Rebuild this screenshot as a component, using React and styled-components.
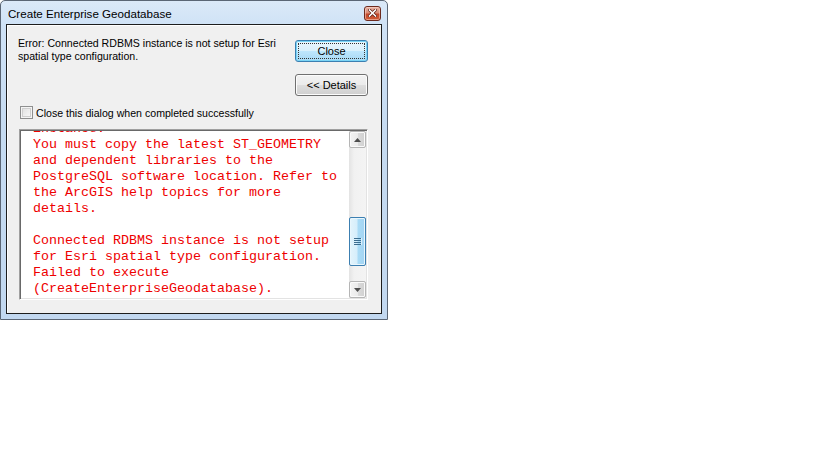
import React from 'react'
import styled, { createGlobalStyle } from 'styled-components'

const GlobalStyle = createGlobalStyle`
  html, body {
    margin: 0;
    padding: 0;
    background: #ffffff;
  }
  body {
    font-family: "Liberation Sans", Arial, sans-serif;
  }
`

const messageLines = [
  'You must copy the latest ST_GEOMETRY',
  'and dependent libraries to the',
  'PostgreSQL software location. Refer to',
  'the ArcGIS help topics for more',
  'details.',
  '',
  'Connected RDBMS instance is not setup',
  'for Esri spatial type configuration.',
  'Failed to execute',
  '(CreateEnterpriseGeodatabase).',
]

function App() {
  return (
    <>
      <GlobalStyle />
      <Window>
        <TitleBar>
          <Title>Create Enterprise Geodatabase</Title>
          <CloseX aria-label="Close">
            <svg width="9" height="8" viewBox="0 0 9 8">
              <path d="M1.5 1 L7.5 7 M7.5 1 L1.5 7" stroke="#5a1a10" strokeWidth="3" strokeLinecap="square" />
              <path d="M1.5 1 L7.5 7 M7.5 1 L1.5 7" stroke="#ffffff" strokeWidth="1.6" strokeLinecap="square" />
            </svg>
          </CloseX>
        </TitleBar>
        <Client>
          <TopRow>
            <ErrorText>
              Error: Connected RDBMS instance is not setup for Esri spatial type configuration.
            </ErrorText>
            <ButtonColumn>
              <Button primary>
                <span>Close</span>
              </Button>
              <Button>
                <span>&lt;&lt; Details</span>
              </Button>
            </ButtonColumn>
          </TopRow>
          <CheckRow>
            <Checkbox />
            <span>Close this dialog when completed successfully</span>
          </CheckRow>
          <Messages>
            <MessageText>
              <Line>instance.</Line>
              {messageLines.map((line, i) => (
                <Line key={i}>{line || '\u00a0'}</Line>
              ))}
            </MessageText>
            <ScrollBar>
              <ScrollButton>
                <svg width="7" height="4" viewBox="0 0 7 4">
                  <path d="M0 4 L3.5 0 L7 4 Z" fill="#4d4d4d" />
                </svg>
              </ScrollButton>
              <Track>
                <Thumb>
                  <Grip />
                </Thumb>
              </Track>
              <ScrollButton>
                <svg width="7" height="4" viewBox="0 0 7 4">
                  <path d="M0 0 L7 0 L3.5 4 Z" fill="#4d4d4d" />
                </svg>
              </ScrollButton>
            </ScrollBar>
          </Messages>
        </Client>
      </Window>
    </>
  )
}

export default App

const Window = styled.div`
  width: 388px;
  height: 320px;
  box-sizing: border-box;
  border: 1px solid #5b6675;
  border-radius: 5px 5px 0 0;
  background: linear-gradient(180deg, #dbe9f8 0%, #cfe2f6 8%, #c6dbf1 40%, #c2d8f0 100%);
  padding: 0 5px 5px 5px;
  display: flex;
  flex-direction: column;
`

const TitleBar = styled.div`
  height: 23px;
  display: flex;
  align-items: center;
  justify-content: space-between;
  padding-left: 2px;
  padding-right: 1px;
`

const Title = styled.div`
  font-family: "Liberation Sans", Arial, sans-serif;
  font-size: 11.6px;
  color: #000;
  margin-top: 1px;
`

const CloseX = styled.div`
  width: 17px;
  height: 15px;
  box-sizing: border-box;
  margin-top: 1px;
  border: 1px solid #6d2a1e;
  border-radius: 3px;
  background: linear-gradient(180deg, #e8b3a5 0%, #d98a74 45%, #c4482b 55%, #cf5a35 100%);
  box-shadow: inset 0 0 0 1px rgba(255, 220, 210, 0.5);
  display: flex;
  align-items: center;
  justify-content: center;
`

const Client = styled.div`
  flex: 1;
  border: 1px solid #1d1d1d;
  background: #f0f0f0;
  box-shadow: inset 1px 1px 0 #ffffff;
  padding: 12px 13px 13px 12px;
  display: flex;
  flex-direction: column;
`

const TopRow = styled.div`
  display: flex;
  justify-content: space-between;
`

const ErrorText = styled.div`
  width: 268px;
  font-size: 10.6px;
  line-height: 13px;
  color: #000;
  margin-left: -1px;
`

const ButtonColumn = styled.div`
  display: flex;
  flex-direction: column;
  gap: 12px;
  margin-top: 3px;
`

const Button = styled.div`
  width: 73px;
  height: 22px;
  box-sizing: border-box;
  border: 1px solid ${p => (p.primary ? '#3c7fb1' : '#707070')};
  border-radius: 3px;
  background: ${p =>
    p.primary
      ? 'linear-gradient(180deg, #eaf6fd 0%, #d9f0fc 50%, #bee6fd 51%, #a7d9f5 100%)'
      : 'linear-gradient(180deg, #f2f2f2 0%, #ebebeb 50%, #dddddd 51%, #cfcfcf 100%)'};
  box-shadow: ${p => (p.primary ? 'inset 0 0 0 1px #7ad4f5' : 'inset 0 0 0 1px #fcfcfc')};
  display: flex;
  align-items: center;
  justify-content: center;
  font-size: 11px;
  color: #000;
  padding: 2px;

  span {
    flex: 1;
    align-self: stretch;
    display: flex;
    align-items: center;
    justify-content: center;
    border: 1px dotted ${p => (p.primary ? '#333' : 'transparent')};
  }
`

const CheckRow = styled.div`
  display: flex;
  align-items: center;
  gap: 3px;
  margin-top: 10px;
  margin-left: 1px;
  font-size: 10.6px;
  color: #000;
  height: 13px;
`

const Checkbox = styled.div`
  width: 13px;
  height: 13px;
  box-sizing: border-box;
  border: 1px solid #8e8f8f;
  background: linear-gradient(135deg, #dcdcdc 0%, #f0f0f0 60%, #fbfbfb 100%);
  box-shadow: inset 0 0 0 1px #f4f4f4, inset 0 0 0 2px #cfcfcf;
`

const Messages = styled.div`
  margin-top: 10px;
  height: 171px;
  box-sizing: border-box;
  border-top: 1px solid #a0a0a0;
  border-left: 1px solid #a0a0a0;
  border-right: 1px solid #ffffff;
  border-bottom: 1px solid #ffffff;
  box-shadow: inset 1px 1px 0 #696969, inset -1px -1px 0 #e3e3e3;
  background: #ffffff;
  display: flex;
  overflow: hidden;
  padding: 1px 1px 1px 1px;
`

const MessageText = styled.div`
  flex: 1;
  overflow: hidden;
  padding-left: 12px;
`

const Line = styled.div`
  font-family: "Liberation Mono", "Courier New", monospace;
  font-size: 13.33px;
  line-height: 16px;
  height: 16px;
  color: #ee0000;
  white-space: pre;
  &:first-child {
    margin-top: -10px;
  }
`

const ScrollBar = styled.div`
  width: 17px;
  display: flex;
  flex-direction: column;
  background: linear-gradient(90deg, #e3e3e3 0%, #f1f1f1 30%, #f4f4f4 100%);
`

const ScrollButton = styled.div`
  height: 17px;
  box-sizing: border-box;
  border: 1px solid #b5b5b5;
  border-radius: 2px;
  background: linear-gradient(90deg, #f3f3f3 0%, #ebebeb 50%, #dbdbdb 51%, #d0d0d0 100%);
  box-shadow: inset 0 0 0 1px #fafafa;
  display: flex;
  align-items: center;
  justify-content: center;
`

const Track = styled.div`
  flex: 1;
  display: flex;
  flex-direction: column;
  justify-content: flex-end;
  padding-bottom: 15px;
`

const Thumb = styled.div`
  height: 49px;
  box-sizing: border-box;
  border: 1px solid #3c7fb1;
  border-radius: 2px;
  background: linear-gradient(90deg, #e3f4fc 0%, #d6eefb 45%, #a9dbf6 55%, #a4d4f2 100%);
  box-shadow: inset 0 0 0 1px #e8f6fd;
  display: flex;
  align-items: center;
  justify-content: center;
`

const Grip = styled.div`
  width: 7px;
  height: 7px;
  background: repeating-linear-gradient(180deg, #3c6e90 0px, #3c6e90 1px, transparent 1px, transparent 2px);
  box-shadow: 1px 0 0 rgba(255, 255, 255, 0.6);
`
